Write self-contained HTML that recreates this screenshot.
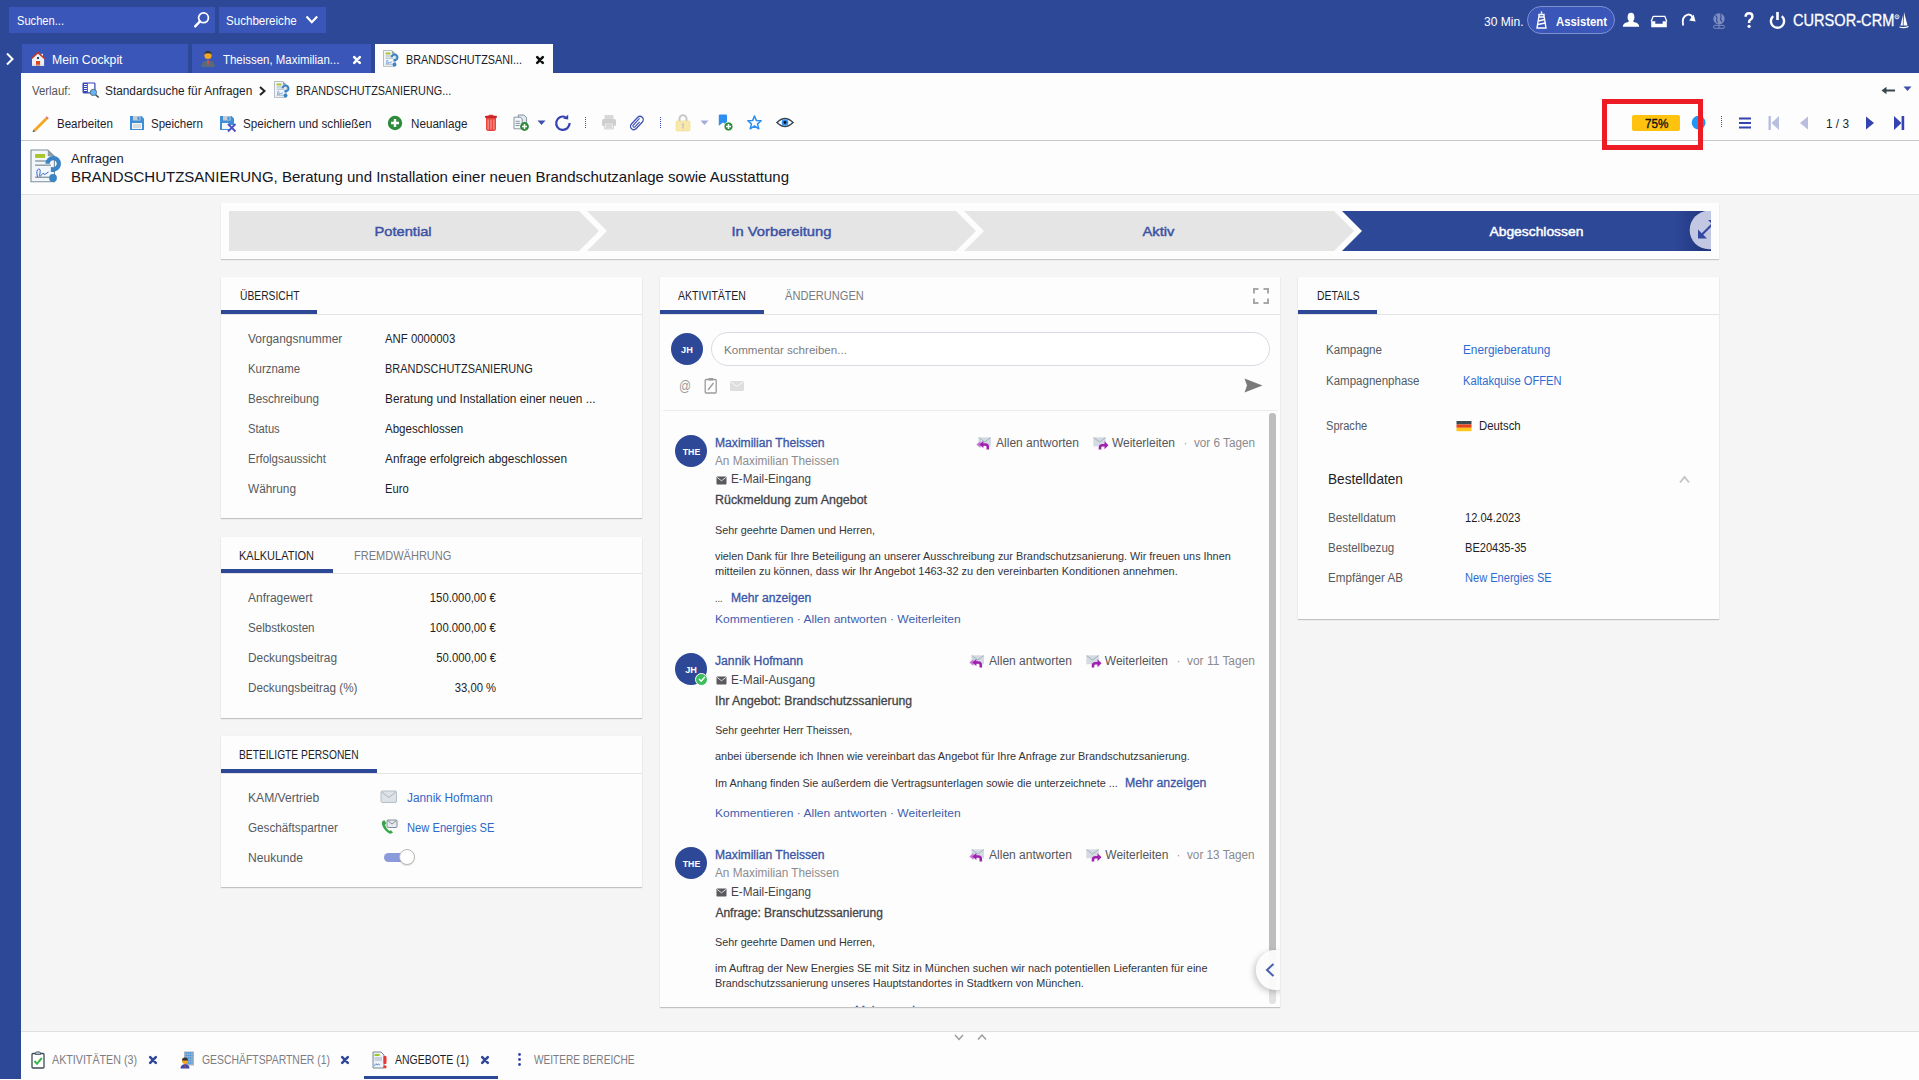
<!DOCTYPE html><html><head><meta charset="utf-8"><title>CURSOR-CRM</title><style>
html,body{margin:0;padding:0;}
body{width:1919px;height:1080px;position:relative;overflow:hidden;background:#F5F5F5;font-family:"Liberation Sans",sans-serif;}
.t{position:absolute;white-space:nowrap;line-height:1;}
svg{overflow:visible}
</style></head><body>
<div style="position:absolute;left:0px;top:0px;width:1919px;height:73px;background:#2E4898"></div>
<div style="position:absolute;left:0px;top:0px;width:21px;height:1079px;background:#2E4898"></div>
<div style="position:absolute;left:9px;top:7px;width:206px;height:26px;background:#3A56B8"></div>
<div class="t" style="left:17.00px;top:15px;font-size:12.30px;color:#fff;transform:scaleX(0.9044);transform-origin:left;">Suchen...</div>
<svg style="position:absolute;left:193px;top:11px;" width="17" height="18" viewBox="0 0 17 18"><circle cx="10.5" cy="6.8" r="4.9" fill="none" stroke="#fff" stroke-width="1.8"/><line x1="7" y1="10.4" x2="2.2" y2="15.4" stroke="#fff" stroke-width="2.4" stroke-linecap="round"/></svg>
<div style="position:absolute;left:219px;top:7px;width:107px;height:26px;background:#3A56B8"></div>
<div class="t" style="left:226.40px;top:15px;font-size:12.30px;color:#fff;transform:scaleX(0.9413);transform-origin:left;">Suchbereiche</div>
<svg style="position:absolute;left:305px;top:15px;" width="14" height="10" viewBox="0 0 14 10"><polyline points="1.5,1.5 6.8,7.2 12.2,1.5" fill="none" stroke="#fff" stroke-width="2.2"/></svg>
<svg style="position:absolute;left:5px;top:52px;" width="10" height="14" viewBox="0 0 10 14"><polyline points="2,1.5 7.5,7 2,12.5" fill="none" stroke="#fff" stroke-width="2"/></svg>
<div style="position:absolute;left:22px;top:44px;width:166px;height:29px;background:#3A56B8"></div>
<svg style="position:absolute;left:31px;top:52px;" width="14" height="14" viewBox="0 0 14 14"><rect x="10.2" y="1.8" width="1.8" height="3" fill="#E8ECF4"/><polygon points="7,0.8 1,6.6 1,13.9 13.1,13.9 13.1,6.6" fill="#ECEEF6"/><polyline points="0.3,6.8 7,0.6 13.8,6.8" fill="none" stroke="#C0392B" stroke-width="1.5"/><rect x="5" y="9" width="4.1" height="4.9" fill="#E0451B"/><rect x="6" y="5" width="2" height="2" fill="#1D4F7A"/><rect x="1" y="12.7" width="12.1" height="0.8" fill="#C8CEE0"/></svg>
<div class="t" style="left:51.80px;top:54px;font-size:12.30px;color:#fff;transform:scaleX(0.9917);transform-origin:left;">Mein Cockpit</div>
<div style="position:absolute;left:192px;top:44px;width:179px;height:29px;background:#3A56B8"></div>
<svg style="position:absolute;left:201px;top:51px;" width="14" height="16" viewBox="0 0 14 16"><circle cx="7" cy="4.5" r="3.6" fill="#F5A623"/><path d="M3.3,3.6 Q3.5,0 7,0 Q10.5,0 10.7,3.6 Q9,2 7,2.2 Q5,2 3.3,3.6Z" fill="#333"/><path d="M0,16 Q0.5,9.5 7,9.3 Q13.5,9.5 14,16Z" fill="#5A6B78"/><polygon points="6,9.5 8,9.5 7.6,14 6.4,14" fill="#E04A5A"/></svg>
<div class="t" style="left:223.00px;top:54px;font-size:12.30px;color:#fff;transform:scaleX(0.9306);transform-origin:left;">Theissen, Maximilian...</div>
<svg style="position:absolute;left:352.5px;top:55.5px;" width="8" height="8" viewBox="0 0 8 8"><path d="M1.2,1.2 L6.8,6.8 M6.8,1.2 L1.2,6.8" stroke="#fff" stroke-width="2.6" stroke-linecap="round"/></svg>
<div style="position:absolute;left:375px;top:44px;width:178px;height:29px;background:#FDFDFD"></div>
<div class="t" style="left:406.00px;top:54px;font-size:12.00px;color:#1a1a2a;transform:scaleX(0.9015);transform-origin:left;">BRANDSCHUTZSANI...</div>
<svg style="position:absolute;left:535.5px;top:55.5px;" width="8" height="8" viewBox="0 0 8 8"><path d="M1.2,1.2 L6.8,6.8 M6.8,1.2 L1.2,6.8" stroke="#111" stroke-width="2.6" stroke-linecap="round"/></svg>
<div class="t" style="left:1483.50px;top:16px;font-size:12.60px;color:#fff;transform:scaleX(0.9560);transform-origin:left;">30 Min.</div>
<div style="position:absolute;left:1527px;top:6px;width:88px;height:28px;background:#3A56B8;border:1px solid #7D90D0;border-radius:14px;box-sizing:border-box"></div>
<svg style="position:absolute;left:1535px;top:11px;" width="13" height="18" viewBox="0 0 13 18"><path d="M6.5,0.5 L6.5,2.5 M4,3.5 L9,3.5 L9,6 L4,6Z M3.8,6 L2,17 L11,17 L9.2,6" fill="none" stroke="#fff" stroke-width="1.4"/><path d="M3.3,10 L9.7,8.5 M2.7,13.5 L10.3,12" stroke="#fff" stroke-width="1.4"/></svg>
<div class="t" style="left:1556.00px;top:16px;font-size:12.60px;color:#fff;font-weight:bold;transform:scaleX(0.8993);transform-origin:left;">Assistent</div>
<svg style="position:absolute;left:1622px;top:12px;" width="18" height="16" viewBox="0 0 18 16"><ellipse cx="9" cy="5.2" rx="3.4" ry="4.4" fill="#fff"/><path d="M0.8,14.8 Q1,11.2 5.5,10.3 Q7,9.8 7.3,8.6 L10.7,8.6 Q11,9.8 12.5,10.3 Q17,11.2 17.2,14.8Z" fill="#fff"/></svg>
<svg style="position:absolute;left:1650px;top:14px;" width="18" height="15" viewBox="0 0 18 15"><path d="M3.2,2.3 H14.8 L16.8,7.6 M1.2,7.6 L3.2,2.3" fill="none" stroke="#fff" stroke-width="1.3"/><path d="M1.2,7.3 H5.3 V9.7 H12.7 V7.3 H16.8 V13.3 H1.2Z" fill="#fff"/></svg>
<svg style="position:absolute;left:1681px;top:12px;" width="16" height="16" viewBox="0 0 16 16"><path d="M2.2,13.5 Q0.2,4.5 6.8,2.6 Q9.8,2 11.6,5.2" fill="none" stroke="#fff" stroke-width="1.9"/><polygon points="12.6,2.6 14.6,9.4 8.2,8.4" fill="#fff"/></svg>
<svg style="position:absolute;left:1712px;top:12px;" width="14" height="17" viewBox="0 0 14 17"><g opacity="0.38"><circle cx="7" cy="6.8" r="5.6" fill="#fff"/><path d="M3.5,3.2 Q5.5,4.8 4.8,7.5 Q4.2,9 5.5,11 M8.2,2 Q9.8,3.8 8.8,5.8 Q8,8.2 10.2,9.5" stroke="#2E4898" stroke-width="1.1" fill="none"/><rect x="1.5" y="13.3" width="11" height="3" rx="1.5" fill="none" stroke="#fff" stroke-width="1"/><line x1="7" y1="12.4" x2="7" y2="16" stroke="#fff"/></g></svg>
<svg style="position:absolute;left:1744px;top:12px;" width="10" height="17" viewBox="0 0 10 17"><path d="M1.6,4.8 Q1.6,1.2 5,1.2 Q8.4,1.2 8.4,4.4 Q8.4,6.4 6.6,7.5 Q5.1,8.4 5.1,10.2 V11" fill="none" stroke="#fff" stroke-width="2.5"/><circle cx="5.1" cy="14.3" r="1.6" fill="#fff"/></svg>
<svg style="position:absolute;left:1769px;top:11px;" width="17" height="18" viewBox="0 0 17 18"><path d="M4.2,5.2 A6.6,6.6 0 1 0 12.8,5.2" fill="none" stroke="#fff" stroke-width="2.4"/><line x1="8.5" y1="1" x2="8.5" y2="9" stroke="#fff" stroke-width="2.6"/></svg>
<div class="t" style="left:1792.60px;top:13px;font-size:15.90px;color:#fff;-webkit-text-stroke:0.3px #fff;transform:scaleX(0.9184);transform-origin:left;">CURSOR-CRM</div>
<svg style="position:absolute;left:1894px;top:14px;" width="6" height="6" viewBox="0 0 6 6"><circle cx="3" cy="2.8" r="2" fill="none" stroke="#fff" stroke-width="0.9"/><circle cx="3" cy="2.8" r="0.7" fill="#fff"/></svg>
<svg style="position:absolute;left:1899px;top:12px;" width="10" height="17" viewBox="0 0 10 17"><path d="M5,0 L8.5,13.5 L4.5,13.5Z M4,3 L1.5,13.5 L3.8,13.5Z" fill="#fff"/><path d="M0.5,15 Q5,16.5 9.5,14.5" stroke="#fff" stroke-width="1.2" fill="none"/></svg>
<div style="position:absolute;left:21px;top:73px;width:1898px;height:67px;background:#FDFDFD"></div>
<div style="position:absolute;left:21px;top:140px;width:1898px;height:1px;background:#C4C6C8"></div>
<div style="position:absolute;left:21px;top:141px;width:1898px;height:53px;background:#FDFDFD"></div>
<div style="position:absolute;left:21px;top:194px;width:1898px;height:1px;background:#E2E2E2"></div>
<div class="t" style="left:32.40px;top:85px;font-size:12.30px;color:#555;transform:scaleX(0.9255);transform-origin:left;">Verlauf:</div>
<svg style="position:absolute;left:82px;top:82px;" width="18" height="17" viewBox="0 0 18 17"><rect x="1.1" y="1" width="11.8" height="9.8" rx="0.8" fill="#fff" stroke="#3543B8" stroke-width="1.2"/><rect x="1.1" y="1" width="4.7" height="9.8" fill="#3543B8"/><rect x="2" y="2" width="2.9" height="1" fill="#fff"/><rect x="2" y="4" width="2.9" height="1" fill="#fff"/><rect x="2" y="6" width="2.9" height="1" fill="#fff"/><rect x="2" y="8" width="2.9" height="1" fill="#fff"/><line x1="13.6" y1="12.7" x2="16.7" y2="15.6" stroke="#37474F" stroke-width="1.4"/><circle cx="11.4" cy="10.4" r="3.2" fill="#64B5F6" stroke="#4A5560" stroke-width="0.7"/></svg>
<div class="t" style="left:104.70px;top:85px;font-size:12.30px;color:#1E1E2E;transform:scaleX(0.9617);transform-origin:left;">Standardsuche für Anfragen</div>
<svg style="position:absolute;left:258px;top:86px;" width="9" height="10" viewBox="0 0 9 10"><polyline points="2,1 6.5,5 2,9" fill="none" stroke="#222" stroke-width="2"/></svg>
<svg style="position:absolute;left:272px;top:79px;" width="20" height="21" viewBox="0 0 20 21"><g transform="translate(0,0) scale(0.5)"><path d="M5,5 H21.8 L28.4,11.3 V36.8 H5Z" fill="#F2F6FB" stroke="#7E8E98" stroke-width="1.1"/><polygon points="21.8,5 28.4,11.3 21.8,11.3" fill="#8E9CA6"/><rect x="9.1" y="9" width="10" height="3.9" fill="#A9C52A"/><rect x="9.1" y="15.3" width="14" height="1.4" fill="#8A9AA4"/><rect x="9.1" y="19.5" width="15.8" height="1.4" fill="#8A9AA4"/><rect x="9.1" y="31.6" width="14" height="1.4" fill="#8A9AA4"/><path d="M11.5,32 Q9.8,25 12.6,24 Q15.2,23.5 13.6,30.5 Q13.2,32.5 16,29.5 L17.5,28 Q17.5,30.5 19.8,28.8 L22.5,27" fill="none" stroke="#2F6AD0" stroke-width="1"/><path d="M21.55,18.7 A5.65,5.65 0 1 1 27,24.35 V26.9" fill="none" stroke="#3A83C4" stroke-width="4.3"/><circle cx="27" cy="33" r="3.9" fill="#3A83C4"/></g></svg>
<div class="t" style="left:295.80px;top:85px;font-size:12.30px;color:#1E1E2E;transform:scaleX(0.8802);transform-origin:left;">BRANDSCHUTZSANIERUNG...</div>
<svg style="position:absolute;left:1881px;top:86px;" width="15" height="10" viewBox="0 0 15 10"><polygon points="0.5,4.5 5.5,0.8 5.5,8.2" fill="#37474F"/><line x1="4" y1="4.5" x2="14" y2="4.5" stroke="#37474F" stroke-width="2"/></svg>
<svg style="position:absolute;left:1903px;top:86px;" width="9" height="6" viewBox="0 0 9 6"><polygon points="0.5,0.5 8.5,0.5 4.5,5" fill="#3D4FB0"/></svg>
<svg style="position:absolute;left:31px;top:114px;" width="19" height="18" viewBox="0 0 19 18"><path d="M2.5,15.5 L14.5,3.5 L16.5,5.5 L4.5,17.5Z" fill="#F5A623"/><path d="M14.5,3.5 L15.8,2.2 L17.8,4.2 L16.5,5.5Z" fill="#E57373"/><path d="M2.5,15.5 L1.5,18 L4.5,17.5Z" fill="#555"/></svg>
<div class="t" style="left:56.50px;top:118px;font-size:12.30px;color:#1E1E2E;transform:scaleX(0.9380);transform-origin:left;">Bearbeiten</div>
<svg style="position:absolute;left:129px;top:115px;" width="16" height="16" viewBox="0 0 16 16"><path d="M1,1 H12.5 L15,3.5 V15 H1Z" fill="#3F8FD8"/><rect x="4" y="1" width="7.5" height="4.5" fill="#C9CDD2"/><rect x="8.5" y="1.8" width="2" height="3" fill="#3F8FD8"/><rect x="3" y="8" width="10" height="6" fill="#F4F6F8"/><path d="M4,10 H12 M4,12 H12" stroke="#B0B6BE" stroke-width="0.8"/></svg>
<div class="t" style="left:151.40px;top:118px;font-size:12.30px;color:#1E1E2E;transform:scaleX(0.9353);transform-origin:left;">Speichern</div>
<svg style="position:absolute;left:219px;top:115px;" width="18" height="17" viewBox="0 0 18 17"><path d="M1,1 H12.5 L15,3.5 V10 H10 V15 H1Z" fill="#3F8FD8"/><rect x="4" y="1" width="7.5" height="4.5" fill="#C9CDD2"/><rect x="8.5" y="1.8" width="2" height="3" fill="#3F8FD8"/><rect x="3" y="8" width="7" height="6" fill="#F4F6F8"/><path d="M9,9 L16.5,16.5 M16.5,9 L9,16.5" stroke="#4A4FC2" stroke-width="1.8"/></svg>
<div class="t" style="left:242.60px;top:118px;font-size:12.30px;color:#1E1E2E;transform:scaleX(0.9485);transform-origin:left;">Speichern und schließen</div>
<svg style="position:absolute;left:387px;top:115px;" width="16" height="16" viewBox="0 0 16 16"><circle cx="8" cy="8" r="7.2" fill="#2E8B3A"/><path d="M8,4 V12 M4,8 H12" stroke="#fff" stroke-width="2.4"/></svg>
<div class="t" style="left:411.00px;top:118px;font-size:12.30px;color:#1E1E2E;transform:scaleX(0.9480);transform-origin:left;">Neuanlage</div>
<svg style="position:absolute;left:484px;top:114px;" width="14" height="18" viewBox="0 0 14 18"><rect x="4.5" y="0.8" width="5" height="1.8" rx="0.8" fill="#E53935"/><rect x="1" y="1.8" width="12" height="2.3" rx="1" fill="#C62828"/><path d="M2,4 H12 V14.8 Q12,17 9.8,17 H4.2 Q2,17 2,14.8Z" fill="#E8453C"/><rect x="3.6" y="5.5" width="1.1" height="10" fill="#F7A29B"/><rect x="6.45" y="5.5" width="1.1" height="10" fill="#F7A29B"/><rect x="9.3" y="5.5" width="1.1" height="10" fill="#F7A29B"/></svg>
<svg style="position:absolute;left:513px;top:114px;" width="17" height="18" viewBox="0 0 17 18"><path d="M5.3,1 H11 L13.6,3.6 V9.5 H5.3Z" fill="#E3E8EE" stroke="#7A8B96" stroke-width="0.9"/><path d="M1,3.2 H7.5 L9.2,5 V14.8 H1Z" fill="#F4F7FA" stroke="#7A8B96" stroke-width="0.9"/><path d="M2.6,7.3 H6.8 M2.6,9.4 H7.2 M2.6,11.5 H6.5" stroke="#7A8B96" stroke-width="0.9"/><circle cx="11.5" cy="12.5" r="4.4" fill="#2E8B3A"/><path d="M11.5,10 V15 M9,12.5 H14" stroke="#fff" stroke-width="1.5"/></svg>
<svg style="position:absolute;left:537px;top:120px;" width="9" height="6" viewBox="0 0 9 6"><polygon points="0.5,0.5 8.5,0.5 4.5,5" fill="#3D4FB0"/></svg>
<svg style="position:absolute;left:555px;top:114px;" width="16" height="17" viewBox="0 0 16 17"><path d="M14.6,9.1 A6.7,6.7 0 1 1 10.4,3" fill="none" stroke="#3543B0" stroke-width="2.2"/><polygon points="8.2,4.8 13.2,0.8 13.2,5.6" fill="#3543B0"/></svg>
<div style="position:absolute;left:585px;top:117px;width:1px;height:11px;background:repeating-linear-gradient(#3D4FB0 0 1px,transparent 1px 2px)"></div>
<svg style="position:absolute;left:601px;top:114px;" width="16" height="16" viewBox="0 0 16 16"><rect x="3.5" y="1" width="9" height="4" fill="#D8D8D8"/><rect x="1" y="5" width="14" height="7" rx="1.5" fill="#CFCFCF"/><rect x="3.5" y="9" width="9" height="6" fill="#E9E9E9" stroke="#C6C6C6" stroke-width="0.6"/><path d="M5,11 H11 M5,13 H11" stroke="#BDBDBD" stroke-width="0.7"/></svg>
<svg style="position:absolute;left:630px;top:114px;" width="14" height="16" viewBox="0 0 14 16"><g transform="translate(6.9,9) rotate(-47)"><rect x="-7.8" y="-3.3" width="15.6" height="6.6" rx="3.3" fill="none" stroke="#3F51B5" stroke-width="1.3"/><path d="M5.2,-1.2 H-4.6 Q-5.9,0 -4.6,1.2 H2.8" fill="none" stroke="#3F51B5" stroke-width="1.1"/></g></svg>
<div style="position:absolute;left:660px;top:117px;width:1px;height:11px;background:repeating-linear-gradient(#3D4FB0 0 1px,transparent 1px 2px)"></div>
<svg style="position:absolute;left:675px;top:114px;" width="16" height="18" viewBox="0 0 16 18"><path d="M4.5,7 V4.8 A3.5,3.5 0 0 1 11.5,4.8 V7" fill="none" stroke="#C8C8C8" stroke-width="2"/><rect x="1" y="7" width="14" height="10" rx="1.2" fill="#F8E9A8" stroke="#EEDC8E" stroke-width="0.6"/><rect x="7.2" y="10" width="1.6" height="4.5" fill="#C9C9C9"/><circle cx="8" cy="10.5" r="1.3" fill="#C9C9C9"/></svg>
<svg style="position:absolute;left:700px;top:120px;" width="9" height="6" viewBox="0 0 9 6"><polygon points="0.5,0.5 8.5,0.5 4.5,5" fill="#A5ABD8"/></svg>
<svg style="position:absolute;left:718px;top:114px;" width="16" height="18" viewBox="0 0 16 18"><path d="M0.8,1.5 Q0.8,0.5 2,0.5 H7.8 Q9,0.5 9,1.5 V11 L4.9,8.5 L0.8,11.8Z" fill="#2B8EF0"/><circle cx="10.5" cy="12.5" r="4.5" fill="#2E8B3A" stroke="#fff" stroke-width="0.8"/><path d="M10.5,10 V15 M8,12.5 H13" stroke="#fff" stroke-width="1.6"/></svg>
<svg style="position:absolute;left:747px;top:115px;" width="15" height="15" viewBox="0 0 15 15"><polygon points="7.5,1 9.4,5.6 14.2,5.8 10.5,8.9 11.8,13.8 7.5,11 3.2,13.8 4.5,8.9 0.8,5.8 5.6,5.6" fill="none" stroke="#2B8EF0" stroke-width="1.5" stroke-linejoin="round"/></svg>
<svg style="position:absolute;left:776px;top:116px;" width="18" height="13" viewBox="0 0 18 13"><path d="M1,6.5 Q9,-1.5 17,6.5 Q9,14.5 1,6.5Z" fill="#fff" stroke="#37474F" stroke-width="1.6"/><circle cx="9" cy="6.5" r="3.3" fill="#2B8EF0"/><circle cx="9" cy="6.5" r="1.4" fill="#111"/></svg>
<div style="position:absolute;left:1632px;top:115px;width:48px;height:16px;background:#FFC20E;border-radius:2px"></div>
<div class="t" style="left:1645.00px;top:118px;font-size:12.30px;color:#141414;-webkit-text-stroke:0.35px #141414;transform:scaleX(0.9506);transform-origin:left;">75%</div>
<svg style="position:absolute;left:1691px;top:115px;" width="15" height="15" viewBox="0 0 15 15"><circle cx="7.6" cy="7.7" r="6.9" fill="#2196F3"/></svg>
<div style="position:absolute;left:1602px;top:99px;width:101px;height:51px;border:5px solid #ED1C24;box-sizing:border-box"></div>
<div style="position:absolute;left:1721px;top:116px;width:1px;height:12px;background:repeating-linear-gradient(#3D4FB0 0 1px,transparent 1px 2px)"></div>
<svg style="position:absolute;left:1738px;top:117px;" width="14" height="12" viewBox="0 0 14 12"><path d="M1,1.5 H13 M1,6 H13 M1,10.5 H13" stroke="#3543B0" stroke-width="2"/></svg>
<svg style="position:absolute;left:1768px;top:115px;" width="12" height="16" viewBox="0 0 12 16"><rect x="0.5" y="1" width="2.4" height="14" fill="#B8BEE0"/><polygon points="11,1 3.5,8 11,15" fill="#B8BEE0"/></svg>
<svg style="position:absolute;left:1799px;top:116px;" width="10" height="14" viewBox="0 0 10 14"><polygon points="9,0.5 1,7 9,13.5" fill="#B8BEE0"/></svg>
<div class="t" style="left:1826.00px;top:117px;font-size:13.10px;color:#1E1E2E;transform:scaleX(0.9024);transform-origin:left;">1 / 3</div>
<svg style="position:absolute;left:1865px;top:116px;" width="10" height="14" viewBox="0 0 10 14"><polygon points="1,0.5 9,7 1,13.5" fill="#3543B0"/></svg>
<svg style="position:absolute;left:1893px;top:115px;" width="12" height="16" viewBox="0 0 12 16"><polygon points="1,1 8.5,8 1,15" fill="#3543B0"/><rect x="8.6" y="1" width="2.6" height="14" fill="#3543B0"/></svg>
<svg style="position:absolute;left:26px;top:145px;" width="40" height="42" viewBox="0 0 40 42"><g transform="translate(0,0) scale(1.0)"><path d="M5,5 H21.8 L28.4,11.3 V36.8 H5Z" fill="#F2F6FB" stroke="#7E8E98" stroke-width="1.1"/><polygon points="21.8,5 28.4,11.3 21.8,11.3" fill="#8E9CA6"/><rect x="9.1" y="9" width="10" height="3.9" fill="#A9C52A"/><rect x="9.1" y="15.3" width="14" height="1.4" fill="#8A9AA4"/><rect x="9.1" y="19.5" width="15.8" height="1.4" fill="#8A9AA4"/><rect x="9.1" y="31.6" width="14" height="1.4" fill="#8A9AA4"/><path d="M11.5,32 Q9.8,25 12.6,24 Q15.2,23.5 13.6,30.5 Q13.2,32.5 16,29.5 L17.5,28 Q17.5,30.5 19.8,28.8 L22.5,27" fill="none" stroke="#2F6AD0" stroke-width="1"/><path d="M21.55,18.7 A5.65,5.65 0 1 1 27,24.35 V26.9" fill="none" stroke="#3A83C4" stroke-width="4.3"/><circle cx="27" cy="33" r="3.9" fill="#3A83C4"/></g></svg>
<div class="t" style="left:71.00px;top:153px;font-size:12.80px;color:#1E1E2E;transform:scaleX(1.0126);transform-origin:left;">Anfragen</div>
<div class="t" style="left:71.00px;top:170px;font-size:14.50px;color:#141422;transform:scaleX(1.0347);transform-origin:left;">BRANDSCHUTZSANIERUNG, Beratung und Installation einer neuen Brandschutzanlage sowie Ausstattung</div>
<svg style="position:absolute;left:381px;top:48px;" width="20" height="21" viewBox="0 0 20 21"><g transform="translate(0,0) scale(0.5)"><path d="M5,5 H21.8 L28.4,11.3 V36.8 H5Z" fill="#F2F6FB" stroke="#7E8E98" stroke-width="1.1"/><polygon points="21.8,5 28.4,11.3 21.8,11.3" fill="#8E9CA6"/><rect x="9.1" y="9" width="10" height="3.9" fill="#A9C52A"/><rect x="9.1" y="15.3" width="14" height="1.4" fill="#8A9AA4"/><rect x="9.1" y="19.5" width="15.8" height="1.4" fill="#8A9AA4"/><rect x="9.1" y="31.6" width="14" height="1.4" fill="#8A9AA4"/><path d="M11.5,32 Q9.8,25 12.6,24 Q15.2,23.5 13.6,30.5 Q13.2,32.5 16,29.5 L17.5,28 Q17.5,30.5 19.8,28.8 L22.5,27" fill="none" stroke="#2F6AD0" stroke-width="1"/><path d="M21.55,18.7 A5.65,5.65 0 1 1 27,24.35 V26.9" fill="none" stroke="#3A83C4" stroke-width="4.3"/><circle cx="27" cy="33" r="3.9" fill="#3A83C4"/></g></svg>
<div style="position:absolute;left:221px;top:203px;width:1498px;height:56px;background:#FDFDFD;box-shadow:0 1px 1px rgba(0,0,0,0.18)"></div>
<svg style="position:absolute;left:0;top:0" width="1919" height="300" viewBox="0 0 1919 300"><polygon points="229,211 579,211 599,231 579,251 229,251" fill="#E5E5E5"/><polygon points="587,211 956,211 976,231 956,251 587,251 607,231" fill="#E5E5E5"/><polygon points="964,211 1334,211 1354,231 1334,251 964,251 984,231" fill="#E5E5E5"/><defs><linearGradient id="sg" x1="0" x2="1"><stop offset="0" stop-color="#2E4898"/><stop offset="0.9" stop-color="#2E4898"/><stop offset="1" stop-color="#1F3278"/></linearGradient><clipPath id="sc"><rect x="1342" y="211" width="369" height="40"/></clipPath></defs><polygon points="1342,211 1711,211 1711,251 1342,251 1362,231" fill="url(#sg)"/><g clip-path="url(#sc)"><circle cx="1709" cy="230" r="19.3" fill="#C3C8E2"/><path d="M1698,229.5 V238.5 H1707 Z" fill="#3548A0"/><line x1="1701" y1="235.5" x2="1712" y2="224.5" stroke="#3548A0" stroke-width="2.2"/><path d="M1708,220 H1716 V228Z" fill="#3548A0"/></g></svg>
<div class="t" style="left:377.43px;top:225px;font-size:13.40px;color:#3B52A4;-webkit-text-stroke:0.45px #3B52A4;transform:scaleX(1.0931);transform-origin:center;">Potential</div>
<div class="t" style="left:735.56px;top:225px;font-size:13.40px;color:#3B52A4;-webkit-text-stroke:0.45px #3B52A4;transform:scaleX(1.1003);transform-origin:center;">In Vorbereitung</div>
<div class="t" style="left:1144.48px;top:225px;font-size:13.40px;color:#3B52A4;-webkit-text-stroke:0.45px #3B52A4;transform:scaleX(1.1020);transform-origin:center;">Aktiv</div>
<div class="t" style="left:1490.56px;top:225px;font-size:13.40px;color:#fff;-webkit-text-stroke:0.45px #fff;transform:scaleX(1.0344);transform-origin:center;">Abgeschlossen</div>
<div style="position:absolute;left:221px;top:277px;width:421px;height:241px;background:#FDFDFD;box-shadow:0 1px 1px rgba(0,0,0,0.2), 0 0 1px rgba(0,0,0,0.06)"></div>
<div style="position:absolute;left:221px;top:314px;width:421px;height:1px;background:#E4E4E4"></div>
<div style="position:absolute;left:221px;top:310px;width:96px;height:4px;background:#2E4898"></div>
<div class="t" style="left:239.50px;top:290px;font-size:12.60px;color:#1E1E28;transform:scaleX(0.8172);transform-origin:left;">ÜBERSICHT</div>
<div class="t" style="left:248.20px;top:333px;font-size:12.30px;color:#555A60;transform:scaleX(0.9714);transform-origin:left;">Vorgangsnummer</div>
<div class="t" style="left:385.20px;top:333px;font-size:12.30px;color:#1E1E28;transform:scaleX(0.9263);transform-origin:left;">ANF 0000003</div>
<div class="t" style="left:248.20px;top:363px;font-size:12.30px;color:#555A60;transform:scaleX(0.9277);transform-origin:left;">Kurzname</div>
<div class="t" style="left:385.20px;top:363px;font-size:12.30px;color:#1E1E28;transform:scaleX(0.8894);transform-origin:left;">BRANDSCHUTZSANIERUNG</div>
<div class="t" style="left:248.20px;top:393px;font-size:12.30px;color:#555A60;transform:scaleX(0.9440);transform-origin:left;">Beschreibung</div>
<div class="t" style="left:385.20px;top:393px;font-size:12.30px;color:#1E1E28;transform:scaleX(0.9655);transform-origin:left;">Beratung und Installation einer neuen ...</div>
<div class="t" style="left:248.20px;top:423px;font-size:12.30px;color:#555A60;transform:scaleX(0.9091);transform-origin:left;">Status</div>
<div class="t" style="left:385.20px;top:423px;font-size:12.30px;color:#1E1E28;transform:scaleX(0.9387);transform-origin:left;">Abgeschlossen</div>
<div class="t" style="left:248.20px;top:453px;font-size:12.30px;color:#555A60;transform:scaleX(0.9341);transform-origin:left;">Erfolgsaussicht</div>
<div class="t" style="left:385.20px;top:453px;font-size:12.30px;color:#1E1E28;transform:scaleX(0.9610);transform-origin:left;">Anfrage erfolgreich abgeschlossen</div>
<div class="t" style="left:248.20px;top:483px;font-size:12.30px;color:#555A60;transform:scaleX(0.9618);transform-origin:left;">Währung</div>
<div class="t" style="left:385.20px;top:483px;font-size:12.30px;color:#1E1E28;transform:scaleX(0.9122);transform-origin:left;">Euro</div>
<div style="position:absolute;left:221px;top:537px;width:421px;height:181px;background:#FDFDFD;box-shadow:0 1px 1px rgba(0,0,0,0.2), 0 0 1px rgba(0,0,0,0.06)"></div>
<div style="position:absolute;left:221px;top:573px;width:421px;height:1px;background:#E4E4E4"></div>
<div style="position:absolute;left:221px;top:569px;width:112px;height:4px;background:#2E4898"></div>
<div class="t" style="left:239.30px;top:550px;font-size:12.60px;color:#1E1E28;transform:scaleX(0.8732);transform-origin:left;">KALKULATION</div>
<div class="t" style="left:353.50px;top:550px;font-size:12.60px;color:#7A7A80;transform:scaleX(0.8752);transform-origin:left;">FREMDWÄHRUNG</div>
<div class="t" style="left:248.20px;top:592px;font-size:12.30px;color:#555A60;transform:scaleX(0.9727);transform-origin:left;">Anfragewert</div>
<div class="t" style="left:424.19px;top:592px;font-size:12.30px;color:#1E1E28;transform:scaleX(0.9191);transform-origin:right;">150.000,00 €</div>
<div class="t" style="left:248.20px;top:622px;font-size:12.30px;color:#555A60;transform:scaleX(0.9457);transform-origin:left;">Selbstkosten</div>
<div class="t" style="left:424.19px;top:622px;font-size:12.30px;color:#1E1E28;transform:scaleX(0.9191);transform-origin:right;">100.000,00 €</div>
<div class="t" style="left:248.20px;top:652px;font-size:12.30px;color:#555A60;transform:scaleX(0.9643);transform-origin:left;">Deckungsbeitrag</div>
<div class="t" style="left:431.03px;top:652px;font-size:12.30px;color:#1E1E28;transform:scaleX(0.9189);transform-origin:right;">50.000,00 €</div>
<div class="t" style="left:248.20px;top:682px;font-size:12.30px;color:#555A60;transform:scaleX(0.9535);transform-origin:left;">Deckungsbeitrag (%)</div>
<div class="t" style="left:450.87px;top:682px;font-size:12.30px;color:#1E1E28;transform:scaleX(0.9173);transform-origin:right;">33,00 %</div>
<div style="position:absolute;left:221px;top:736px;width:421px;height:151px;background:#FDFDFD;box-shadow:0 1px 1px rgba(0,0,0,0.2), 0 0 1px rgba(0,0,0,0.06)"></div>
<div style="position:absolute;left:221px;top:773px;width:421px;height:1px;background:#E4E4E4"></div>
<div style="position:absolute;left:221px;top:769px;width:156px;height:4px;background:#2E4898"></div>
<div class="t" style="left:239.30px;top:749px;font-size:12.60px;color:#1E1E28;transform:scaleX(0.8134);transform-origin:left;">BETEILIGTE PERSONEN</div>
<div class="t" style="left:248.20px;top:792px;font-size:12.30px;color:#555A60;transform:scaleX(0.9840);transform-origin:left;">KAM/Vertrieb</div>
<div class="t" style="left:248.20px;top:822px;font-size:12.30px;color:#555A60;transform:scaleX(0.9519);transform-origin:left;">Geschäftspartner</div>
<div class="t" style="left:248.20px;top:852px;font-size:12.30px;color:#555A60;transform:scaleX(0.9809);transform-origin:left;">Neukunde</div>
<svg style="position:absolute;left:380px;top:790px;" width="18" height="14" viewBox="0 0 18 14"><rect x="1" y="1" width="15.5" height="11.5" rx="1.5" fill="#DCE2E8" stroke="#B4BEC8" stroke-width="1"/><polyline points="1.5,1.8 8.75,7.5 16,1.8" fill="none" stroke="#AAB4BE" stroke-width="1"/></svg>
<svg style="position:absolute;left:381px;top:819px;" width="17" height="16" viewBox="0 0 17 16"><rect x="6" y="1" width="10" height="7.5" rx="1" fill="#E6EAEE" stroke="#7A8490" stroke-width="0.9"/><polyline points="6.5,1.5 11,5 15.5,1.5" fill="none" stroke="#7A8490" stroke-width="0.9"/><path d="M2.5,1.5 Q0.5,2 1,5.5 Q2.5,11 7.5,14 Q10,15.5 12,13.5 L10,11.3 Q8.8,12.2 7.5,11.2 Q5,9 4.3,6.5 Q4,5.2 5.3,4.6 L3.8,1.5Z" fill="#37A849"/></svg>
<div class="t" style="left:407.00px;top:792px;font-size:12.30px;color:#2F68C8;transform:scaleX(0.9631);transform-origin:left;">Jannik Hofmann</div>
<div class="t" style="left:407.00px;top:822px;font-size:12.30px;color:#2F68C8;transform:scaleX(0.9078);transform-origin:left;">New Energies SE</div>
<div style="position:absolute;left:383.5px;top:852.5px;width:23.5px;height:9.5px;background:#8A9ADB;border-radius:5px"></div>
<div style="position:absolute;left:398.8px;top:848.8px;width:16.4px;height:16.4px;background:#fff;border:1px solid #B8B8B8;border-radius:50%;box-sizing:border-box;box-shadow:0 1px 1px rgba(0,0,0,0.12)"></div>
<div style="position:absolute;left:660px;top:277px;width:620px;height:730px;background:#FDFDFD;box-shadow:0 1px 1px rgba(0,0,0,0.2), 0 0 1px rgba(0,0,0,0.06)"></div>
<div style="position:absolute;left:660px;top:314px;width:620px;height:1px;background:#E4E4E4"></div>
<div style="position:absolute;left:660px;top:310px;width:104px;height:4px;background:#2E4898"></div>
<div class="t" style="left:678.00px;top:290px;font-size:12.60px;color:#1E1E28;transform:scaleX(0.8373);transform-origin:left;">AKTIVITÄTEN</div>
<div class="t" style="left:784.70px;top:290px;font-size:12.60px;color:#7A7A80;transform:scaleX(0.8794);transform-origin:left;">ÄNDERUNGEN</div>
<svg style="position:absolute;left:1253px;top:288px;" width="16" height="16" viewBox="0 0 16 16"><path d="M1,5.5 V1 H5.5 M10.5,1 H15 V5.5 M15,10.5 V15 H10.5 M5.5,15 H1 V10.5" fill="none" stroke="#A8A8A8" stroke-width="2"/></svg>
<div style="position:absolute;left:671px;top:333px;width:32px;height:32px;background:#2E4898;border-radius:50%"></div>
<div class="t" style="left:681.12px;top:346px;font-size:9.20px;color:#fff;font-weight:bold;">JH</div>
<div style="position:absolute;left:711px;top:332px;width:559px;height:34px;background:#fff;border:1px solid #D8DBE2;border-radius:17px;box-sizing:border-box"></div>
<div class="t" style="left:724.40px;top:344px;font-size:11.70px;color:#7C7C80;transform:scaleX(0.9904);transform-origin:left;">Kommentar schreiben...</div>
<div class="t" style="left:679.00px;top:379px;font-size:14.00px;color:#9A9A9A;transform:scaleX(0.8443);transform-origin:left;">@</div>
<svg style="position:absolute;left:704px;top:377px;" width="14" height="17" viewBox="0 0 14 17"><rect x="1.2" y="2.5" width="11" height="13.5" rx="1" fill="none" stroke="#9A9A9A" stroke-width="1.3"/><rect x="4.5" y="1" width="4.5" height="2.5" fill="#9A9A9A"/><line x1="4" y1="13" x2="9.5" y2="6" stroke="#9A9A9A" stroke-width="1.3"/></svg>
<svg style="position:absolute;left:729px;top:380px;" width="16" height="12" viewBox="0 0 16 12"><rect x="1" y="1" width="14" height="10" rx="1.3" fill="#DEDEDE"/><polyline points="1.5,1.8 8,6.5 14.5,1.8" fill="none" stroke="#F8F8F8" stroke-width="1"/></svg>
<svg style="position:absolute;left:1244px;top:378px;" width="19" height="15" viewBox="0 0 19 15"><polygon points="0.5,0.5 18.5,7.5 0.5,14.5 3,7.5" fill="#7A7A7A"/></svg>
<div style="position:absolute;left:663px;top:410px;width:615px;height:1px;background:#ECECEC"></div>
<div style="position:absolute;left:660px;top:411px;width:620px;height:596px;overflow:hidden">
<div style="position:absolute;left:15px;top:24px;width:32px;height:32px;background:#2E4898;border-radius:50%"></div>
<div class="t" style="left:21.50px;top:36px;font-size:9.50px;color:#fff;font-weight:bold;transform:scaleX(0.9211);transform-origin:center;">THE</div>
<div class="t" style="left:55.25px;top:26px;font-size:12.00px;color:#3A55A6;-webkit-text-stroke:0.3px #3A55A6;transform:scaleX(1.0094);transform-origin:left;">Maximilian Theissen</div>
<svg style="position:absolute;left:316px;top:26px;" width="16" height="14" viewBox="0 0 16 14"><rect x="2.5" y="0.3" width="12.5" height="9" fill="#D3DAE2"/><polyline points="2.8,0.6 8.75,5 14.7,0.6" fill="none" stroke="#8FA0AE" stroke-width="0.7"/><polygon points="0.3,7.5 4.5,4 4.5,11" fill="#C77DD6"/><polygon points="3.2,7.5 7.4,4 7.4,11" fill="#A020B0"/><path d="M6.5,7.5 H9.3 Q11.8,7.5 11.8,10 V12.6" fill="none" stroke="#A020B0" stroke-width="2.6"/></svg>
<div class="t" style="left:336.30px;top:26px;font-size:12.00px;color:#55555A;transform:scaleX(1.0035);transform-origin:left;">Allen antworten</div>
<svg style="position:absolute;left:432.79999999999995px;top:26px;" width="16" height="14" viewBox="0 0 16 14"><rect x="0.3" y="0.3" width="12.5" height="9" fill="#D3DAE2"/><polyline points="0.6,0.6 6.55,5 12.5,0.6" fill="none" stroke="#8FA0AE" stroke-width="0.7"/><path d="M7,12.6 V10.5 Q7,8.3 9.5,8.3 H12.3" fill="none" stroke="#A020B0" stroke-width="2.6"/><polygon points="11.5,4.3 15.5,8.3 11.5,12.2" fill="#A020B0"/></svg>
<div class="t" style="left:451.90px;top:26px;font-size:12.00px;color:#55555A;">Weiterleiten</div>
<div class="t" style="left:523.50px;top:26px;font-size:12.00px;color:#888;transform:scaleX(0.7508);transform-origin:left;">·</div>
<div class="t" style="left:534.00px;top:26px;font-size:12.00px;color:#8A8A8E;transform:scaleX(0.9762);transform-origin:left;">vor 6 Tagen</div>
<div class="t" style="left:55.00px;top:44px;font-size:12.00px;color:#8C8C90;transform:scaleX(0.9803);transform-origin:left;">An Maximilian Theissen</div>
<svg style="position:absolute;left:56px;top:65px;" width="11" height="9" viewBox="0 0 11 9"><rect x="0.5" y="0.5" width="10" height="8" rx="0.8" fill="#5A5A5E"/><polyline points="0.8,1.2 5.5,4.8 10.2,1.2" fill="none" stroke="#E8E8E8" stroke-width="0.9"/></svg>
<div class="t" style="left:71.00px;top:62px;font-size:12.00px;color:#444448;transform:scaleX(0.9752);transform-origin:left;">E-Mail-Eingang</div>
<div class="t" style="left:55.00px;top:83px;font-size:12.00px;color:#444448;-webkit-text-stroke:0.3px #444448;transform:scaleX(1.0358);transform-origin:left;">Rückmeldung zum Angebot</div>
<div class="t" style="left:55.20px;top:114px;font-size:10.60px;color:#34343A;transform:scaleX(1.0171);transform-origin:left;">Sehr geehrte Damen und Herren,</div>
<div class="t" style="left:55.20px;top:140px;font-size:10.60px;color:#34343A;transform:scaleX(1.0243);transform-origin:left;">vielen Dank für Ihre Beteiligung an unserer Ausschreibung zur Brandschutzsanierung. Wir freuen uns Ihnen</div>
<div class="t" style="left:55.20px;top:155px;font-size:10.60px;color:#34343A;transform:scaleX(1.0366);transform-origin:left;">mitteilen zu können, dass wir Ihr Angebot 1463-32 zu den vereinbarten Konditionen annehmen.</div>
<div class="t" style="left:55.20px;top:182px;font-size:10.60px;color:#34343A;transform:scaleX(0.8490);transform-origin:left;">...</div>
<div class="t" style="left:70.50px;top:181px;font-size:12.00px;color:#3A55A6;-webkit-text-stroke:0.3px #3A55A6;transform:scaleX(1.0116);transform-origin:left;">Mehr anzeigen</div>
<div class="t" style="left:55.00px;top:202px;font-size:11.70px;color:#3F5FAE;transform:scaleX(1.0318);transform-origin:left;">Kommentieren · Allen antworten · Weiterleiten</div>
<div style="position:absolute;left:15px;top:242px;width:32px;height:32px;background:#2E4898;border-radius:50%"></div>
<div class="t" style="left:24.93px;top:254px;font-size:9.50px;color:#fff;font-weight:bold;transform:scaleX(0.9676);transform-origin:center;">JH</div>
<div style="position:absolute;left:35px;top:261.5px;width:13px;height:13px;background:#3DBE5C;border:1.5px solid #fff;border-radius:50%;box-sizing:border-box"></div>
<svg style="position:absolute;left:37.5px;top:264px;" width="8" height="8" viewBox="0 0 8 8"><polyline points="1,4 3.2,6.2 7,1.8" fill="none" stroke="#fff" stroke-width="1.4"/></svg>
<div class="t" style="left:55.40px;top:244px;font-size:12.00px;color:#3A55A6;-webkit-text-stroke:0.3px #3A55A6;transform:scaleX(1.0149);transform-origin:left;">Jannik Hofmann</div>
<svg style="position:absolute;left:308.6px;top:243.70000000000005px;" width="16" height="14" viewBox="0 0 16 14"><rect x="2.5" y="0.3" width="12.5" height="9" fill="#D3DAE2"/><polyline points="2.8,0.6 8.75,5 14.7,0.6" fill="none" stroke="#8FA0AE" stroke-width="0.7"/><polygon points="0.3,7.5 4.5,4 4.5,11" fill="#C77DD6"/><polygon points="3.2,7.5 7.4,4 7.4,11" fill="#A020B0"/><path d="M6.5,7.5 H9.3 Q11.8,7.5 11.8,10 V12.6" fill="none" stroke="#A020B0" stroke-width="2.6"/></svg>
<div class="t" style="left:329.30px;top:244px;font-size:12.00px;color:#55555A;transform:scaleX(1.0035);transform-origin:left;">Allen antworten</div>
<svg style="position:absolute;left:425.79999999999995px;top:243.70000000000005px;" width="16" height="14" viewBox="0 0 16 14"><rect x="0.3" y="0.3" width="12.5" height="9" fill="#D3DAE2"/><polyline points="0.6,0.6 6.55,5 12.5,0.6" fill="none" stroke="#8FA0AE" stroke-width="0.7"/><path d="M7,12.6 V10.5 Q7,8.3 9.5,8.3 H12.3" fill="none" stroke="#A020B0" stroke-width="2.6"/><polygon points="11.5,4.3 15.5,8.3 11.5,12.2" fill="#A020B0"/></svg>
<div class="t" style="left:444.80px;top:244px;font-size:12.00px;color:#55555A;">Weiterleiten</div>
<div class="t" style="left:516.50px;top:244px;font-size:12.00px;color:#888;transform:scaleX(0.7508);transform-origin:left;">·</div>
<div class="t" style="left:527.00px;top:244px;font-size:12.00px;color:#8A8A8E;transform:scaleX(0.9946);transform-origin:left;">vor 11 Tagen</div>
<svg style="position:absolute;left:56px;top:265px;" width="11" height="9" viewBox="0 0 11 9"><rect x="0.5" y="0.5" width="10" height="8" rx="0.8" fill="#5A5A5E"/><polyline points="0.8,1.2 5.5,4.8 10.2,1.2" fill="none" stroke="#E8E8E8" stroke-width="0.9"/></svg>
<div class="t" style="left:71.40px;top:263px;font-size:12.00px;color:#444448;transform:scaleX(0.9840);transform-origin:left;">E-Mail-Ausgang</div>
<div class="t" style="left:55.40px;top:284px;font-size:12.00px;color:#444448;-webkit-text-stroke:0.3px #444448;transform:scaleX(1.0184);transform-origin:left;">Ihr Angebot: Brandschutzssanierung</div>
<div class="t" style="left:55.30px;top:314px;font-size:10.60px;color:#34343A;">Sehr geehrter Herr Theissen,</div>
<div class="t" style="left:55.30px;top:340px;font-size:10.60px;color:#34343A;transform:scaleX(1.0309);transform-origin:left;">anbei übersende ich Ihnen wie vereinbart das Angebot für Ihre Anfrage zur Brandschutzsanierung.</div>
<div class="t" style="left:55.30px;top:367px;font-size:10.60px;color:#34343A;transform:scaleX(1.0254);transform-origin:left;">Im Anhang finden Sie außerdem die Vertragsunterlagen sowie die unterzeichnete ...</div>
<div class="t" style="left:465.00px;top:366px;font-size:12.00px;color:#3A55A6;-webkit-text-stroke:0.3px #3A55A6;transform:scaleX(1.0255);transform-origin:left;">Mehr anzeigen</div>
<div class="t" style="left:55.00px;top:396px;font-size:11.70px;color:#3F5FAE;transform:scaleX(1.0318);transform-origin:left;">Kommentieren · Allen antworten · Weiterleiten</div>
<div style="position:absolute;left:15px;top:436px;width:32px;height:32px;background:#2E4898;border-radius:50%"></div>
<div class="t" style="left:21.50px;top:448px;font-size:9.50px;color:#fff;font-weight:bold;transform:scaleX(0.9211);transform-origin:center;">THE</div>
<div class="t" style="left:55.40px;top:438px;font-size:12.00px;color:#3A55A6;-webkit-text-stroke:0.3px #3A55A6;transform:scaleX(1.0094);transform-origin:left;">Maximilian Theissen</div>
<svg style="position:absolute;left:309px;top:437.70000000000005px;" width="16" height="14" viewBox="0 0 16 14"><rect x="2.5" y="0.3" width="12.5" height="9" fill="#D3DAE2"/><polyline points="2.8,0.6 8.75,5 14.7,0.6" fill="none" stroke="#8FA0AE" stroke-width="0.7"/><polygon points="0.3,7.5 4.5,4 4.5,11" fill="#C77DD6"/><polygon points="3.2,7.5 7.4,4 7.4,11" fill="#A020B0"/><path d="M6.5,7.5 H9.3 Q11.8,7.5 11.8,10 V12.6" fill="none" stroke="#A020B0" stroke-width="2.6"/></svg>
<div class="t" style="left:329.40px;top:438px;font-size:12.00px;color:#55555A;transform:scaleX(1.0035);transform-origin:left;">Allen antworten</div>
<svg style="position:absolute;left:426px;top:437.70000000000005px;" width="16" height="14" viewBox="0 0 16 14"><rect x="0.3" y="0.3" width="12.5" height="9" fill="#D3DAE2"/><polyline points="0.6,0.6 6.55,5 12.5,0.6" fill="none" stroke="#8FA0AE" stroke-width="0.7"/><path d="M7,12.6 V10.5 Q7,8.3 9.5,8.3 H12.3" fill="none" stroke="#A020B0" stroke-width="2.6"/><polygon points="11.5,4.3 15.5,8.3 11.5,12.2" fill="#A020B0"/></svg>
<div class="t" style="left:445.30px;top:438px;font-size:12.00px;color:#55555A;">Weiterleiten</div>
<div class="t" style="left:516.50px;top:438px;font-size:12.00px;color:#888;transform:scaleX(0.7508);transform-origin:left;">·</div>
<div class="t" style="left:527.40px;top:438px;font-size:12.00px;color:#8A8A8E;transform:scaleX(0.9775);transform-origin:left;">vor 13 Tagen</div>
<div class="t" style="left:55.40px;top:456px;font-size:12.00px;color:#8C8C90;transform:scaleX(0.9803);transform-origin:left;">An Maximilian Theissen</div>
<svg style="position:absolute;left:56px;top:477px;" width="11" height="9" viewBox="0 0 11 9"><rect x="0.5" y="0.5" width="10" height="8" rx="0.8" fill="#5A5A5E"/><polyline points="0.8,1.2 5.5,4.8 10.2,1.2" fill="none" stroke="#E8E8E8" stroke-width="0.9"/></svg>
<div class="t" style="left:71.40px;top:475px;font-size:12.00px;color:#444448;transform:scaleX(0.9752);transform-origin:left;">E-Mail-Eingang</div>
<div class="t" style="left:55.40px;top:496px;font-size:12.00px;color:#444448;-webkit-text-stroke:0.3px #444448;">Anfrage: Branschutzssanierung</div>
<div class="t" style="left:55.20px;top:526px;font-size:10.60px;color:#34343A;transform:scaleX(1.0171);transform-origin:left;">Sehr geehrte Damen und Herren,</div>
<div class="t" style="left:55.20px;top:552px;font-size:10.60px;color:#34343A;transform:scaleX(1.0299);transform-origin:left;">im Auftrag der New Energies SE mit Sitz in München suchen wir nach potentiellen Lieferanten für eine</div>
<div class="t" style="left:55.20px;top:567px;font-size:10.60px;color:#34343A;transform:scaleX(1.0217);transform-origin:left;">Brandschutzssanierung unseres Hauptstandortes in Stadtkern von München.</div>
<div class="t" style="left:195.00px;top:594px;font-size:12.00px;color:#3A55A6;-webkit-text-stroke:0.3px #3A55A6;transform:scaleX(1.0116);transform-origin:left;">Mehr anzeigen</div>
</div>
<div style="position:absolute;left:1269px;top:413px;width:7px;height:591px;background:#E2E2E2;border-radius:3.5px"></div>
<div style="position:absolute;left:1269px;top:413px;width:7px;height:537px;background:#BDBDBD;border-radius:3.5px 3.5px 0 0"></div>
<div style="position:absolute;left:660px;top:277px;width:620px;height:730px;overflow:hidden;pointer-events:none">
<div style="position:absolute;left:596px;top:673px;width:40px;height:40px;background:rgba(252,252,252,0.9);border-radius:50%;box-shadow:-2px 2px 6px rgba(0,0,0,0.22)"></div>
<svg style="position:absolute;left:605px;top:686px;" width="10" height="14" viewBox="0 0 10 14"><polyline points="8.5,1 2,7 8.5,13" fill="none" stroke="#4A5FB0" stroke-width="2"/></svg>
</div>
<div style="position:absolute;left:1298px;top:277px;width:421px;height:342px;background:#FDFDFD;box-shadow:0 1px 1px rgba(0,0,0,0.2), 0 0 1px rgba(0,0,0,0.06)"></div>
<div style="position:absolute;left:1298px;top:314px;width:421px;height:1px;background:#E4E4E4"></div>
<div style="position:absolute;left:1298px;top:310px;width:79px;height:4px;background:#2E4898"></div>
<div class="t" style="left:1316.70px;top:290px;font-size:12.60px;color:#1E1E28;transform:scaleX(0.8259);transform-origin:left;">DETAILS</div>
<div class="t" style="left:1325.90px;top:344px;font-size:12.30px;color:#555A60;transform:scaleX(0.9413);transform-origin:left;">Kampagne</div>
<div class="t" style="left:1462.90px;top:344px;font-size:12.30px;color:#2F6BD0;transform:scaleX(0.9599);transform-origin:left;">Energieberatung</div>
<div class="t" style="left:1325.90px;top:375px;font-size:12.30px;color:#555A60;transform:scaleX(0.9365);transform-origin:left;">Kampagnenphase</div>
<div class="t" style="left:1462.90px;top:375px;font-size:12.30px;color:#2F6BD0;transform:scaleX(0.9063);transform-origin:left;">Kaltakquise OFFEN</div>
<div class="t" style="left:1325.90px;top:420px;font-size:12.30px;color:#555A60;transform:scaleX(0.8994);transform-origin:left;">Sprache</div>
<svg style="position:absolute;left:1456px;top:421px;" width="16" height="11" viewBox="0 0 16 11"><rect x="0.5" y="0" width="15" height="3.4" fill="#3A4A52"/><rect x="0.5" y="3.4" width="15" height="3.4" fill="#E8431E"/><rect x="0.5" y="6.8" width="15" height="3.4" fill="#FFC61A"/></svg>
<div class="t" style="left:1479.00px;top:420px;font-size:12.30px;color:#1E1E28;transform:scaleX(0.9242);transform-origin:left;">Deutsch</div>
<div class="t" style="left:1327.70px;top:472px;font-size:14.20px;color:#1E1E28;transform:scaleX(0.9597);transform-origin:left;">Bestelldaten</div>
<svg style="position:absolute;left:1679px;top:475px;" width="12" height="9" viewBox="0 0 12 9"><polyline points="1,7.5 5.5,2 10,7.5" fill="none" stroke="#C4C4C4" stroke-width="1.8"/></svg>
<div class="t" style="left:1327.70px;top:512px;font-size:12.30px;color:#555A60;transform:scaleX(0.9522);transform-origin:left;">Bestelldatum</div>
<div class="t" style="left:1465.00px;top:512px;font-size:12.30px;color:#1E1E28;transform:scaleX(0.9000);transform-origin:left;">12.04.2023</div>
<div class="t" style="left:1327.70px;top:542px;font-size:12.30px;color:#555A60;transform:scaleX(0.9414);transform-origin:left;">Bestellbezug</div>
<div class="t" style="left:1465.00px;top:542px;font-size:12.30px;color:#1E1E28;transform:scaleX(0.8993);transform-origin:left;">BE20435-35</div>
<div class="t" style="left:1327.70px;top:572px;font-size:12.30px;color:#555A60;transform:scaleX(0.9457);transform-origin:left;">Empfänger AB</div>
<div class="t" style="left:1465.00px;top:572px;font-size:12.30px;color:#2F6BD0;transform:scaleX(0.8995);transform-origin:left;">New Energies SE</div>
<div style="position:absolute;left:21px;top:1031px;width:1898px;height:1px;background:#E0E0E0"></div>
<div style="position:absolute;left:21px;top:1032px;width:1898px;height:48px;background:#FDFDFD"></div>
<div style="position:absolute;left:0px;top:1079px;width:21px;height:1px;background:#FDFDFD"></div>
<svg style="position:absolute;left:31px;top:1051px;" width="14" height="18" viewBox="0 0 14 18"><rect x="1" y="2.5" width="12" height="14.5" rx="1" fill="#fff" stroke="#3F4A55" stroke-width="1.3"/><path d="M4.5,3.5 V2 Q4.5,0.8 7,0.8 Q9.5,0.8 9.5,2 V3.5Z" fill="#AFC2CF" stroke="#3F4A55" stroke-width="0.8"/><polyline points="3.5,10 6,12.8 10.8,7" fill="none" stroke="#3BB54A" stroke-width="2"/></svg>
<div class="t" style="left:52.00px;top:1054px;font-size:12.60px;color:#7C7C82;transform:scaleX(0.8491);transform-origin:left;">AKTIVITÄTEN (3)</div>
<svg style="position:absolute;left:148.5px;top:1055.5px;" width="8" height="8" viewBox="0 0 8 8"><path d="M1.2,1.2 L6.8,6.8 M6.8,1.2 L1.2,6.8" stroke="#2E4898" stroke-width="2.6" stroke-linecap="round"/></svg>
<svg style="position:absolute;left:180px;top:1051px;" width="15" height="18" viewBox="0 0 15 18"><rect x="4" y="0.5" width="10" height="14" fill="#A8B4C0"/><path d="M5.5,2 H12.5 M5.5,4.5 H12.5 M5.5,7 H12.5 M5.5,9.5 H12.5 M5.5,12 H12.5" stroke="#3C8FDC" stroke-width="1.3" stroke-dasharray="1.5 0.6"/><circle cx="5" cy="10" r="3" fill="#F5A623"/><path d="M2,9.6 Q2,6.4 5,6.4 Q8,6.4 8,9.6Z" fill="#333"/><path d="M0.5,17.5 Q0.5,13.5 5,13.3 Q9.5,13.5 9.5,17.5Z" fill="#3949AB"/><rect x="4.6" y="13.5" width="0.9" height="3.5" fill="#E53935"/></svg>
<div class="t" style="left:201.60px;top:1054px;font-size:12.60px;color:#7C7C82;transform:scaleX(0.8261);transform-origin:left;">GESCHÄFTSPARTNER (1)</div>
<svg style="position:absolute;left:340.5px;top:1055.5px;" width="8" height="8" viewBox="0 0 8 8"><path d="M1.2,1.2 L6.8,6.8 M6.8,1.2 L1.2,6.8" stroke="#2E4898" stroke-width="2.6" stroke-linecap="round"/></svg>
<svg style="position:absolute;left:372px;top:1051px;" width="16" height="18" viewBox="0 0 16 18"><path d="M1,1 H9 L12,4 V17 H1Z" fill="#EEF2F8" stroke="#6A7A8A" stroke-width="0.9"/><rect x="2.5" y="3" width="5" height="2" fill="#9DC61E"/><path d="M2.5,7 H10 M2.5,9 H10" stroke="#8896A4" stroke-width="0.7"/><path d="M2.5,15 Q4,11 5,14 Q6,12 8,14" stroke="#3D86C6" fill="none" stroke-width="0.9"/><rect x="11.5" y="5" width="3" height="8" rx="1" fill="#E53935"/><circle cx="13" cy="15.8" r="1.6" fill="#E53935"/></svg>
<div class="t" style="left:394.90px;top:1054px;font-size:12.60px;color:#1E1E28;transform:scaleX(0.8323);transform-origin:left;">ANGEBOTE (1)</div>
<svg style="position:absolute;left:480.5px;top:1055.5px;" width="8" height="8" viewBox="0 0 8 8"><path d="M1.2,1.2 L6.8,6.8 M6.8,1.2 L1.2,6.8" stroke="#2E4898" stroke-width="2.6" stroke-linecap="round"/></svg>
<div style="position:absolute;left:364px;top:1076px;width:134px;height:3px;background:#2E4898"></div>
<svg style="position:absolute;left:517px;top:1052px;" width="5" height="15" viewBox="0 0 5 15"><circle cx="2.5" cy="2.5" r="1.4" fill="#3543B0"/><circle cx="2.5" cy="7.5" r="1.4" fill="#3543B0"/><circle cx="2.5" cy="12.5" r="1.4" fill="#3543B0"/></svg>
<div class="t" style="left:534.00px;top:1054px;font-size:12.60px;color:#7C7C82;transform:scaleX(0.8027);transform-origin:left;">WEITERE BEREICHE</div>
<svg style="position:absolute;left:954px;top:1034px;" width="10" height="7" viewBox="0 0 10 7"><polyline points="1,1 5,5.5 9,1" fill="none" stroke="#9A9A9A" stroke-width="1.4"/></svg>
<svg style="position:absolute;left:977px;top:1034px;" width="10" height="7" viewBox="0 0 10 7"><polyline points="1,5.5 5,1 9,5.5" fill="none" stroke="#9A9A9A" stroke-width="1.4"/></svg>
</body></html>
